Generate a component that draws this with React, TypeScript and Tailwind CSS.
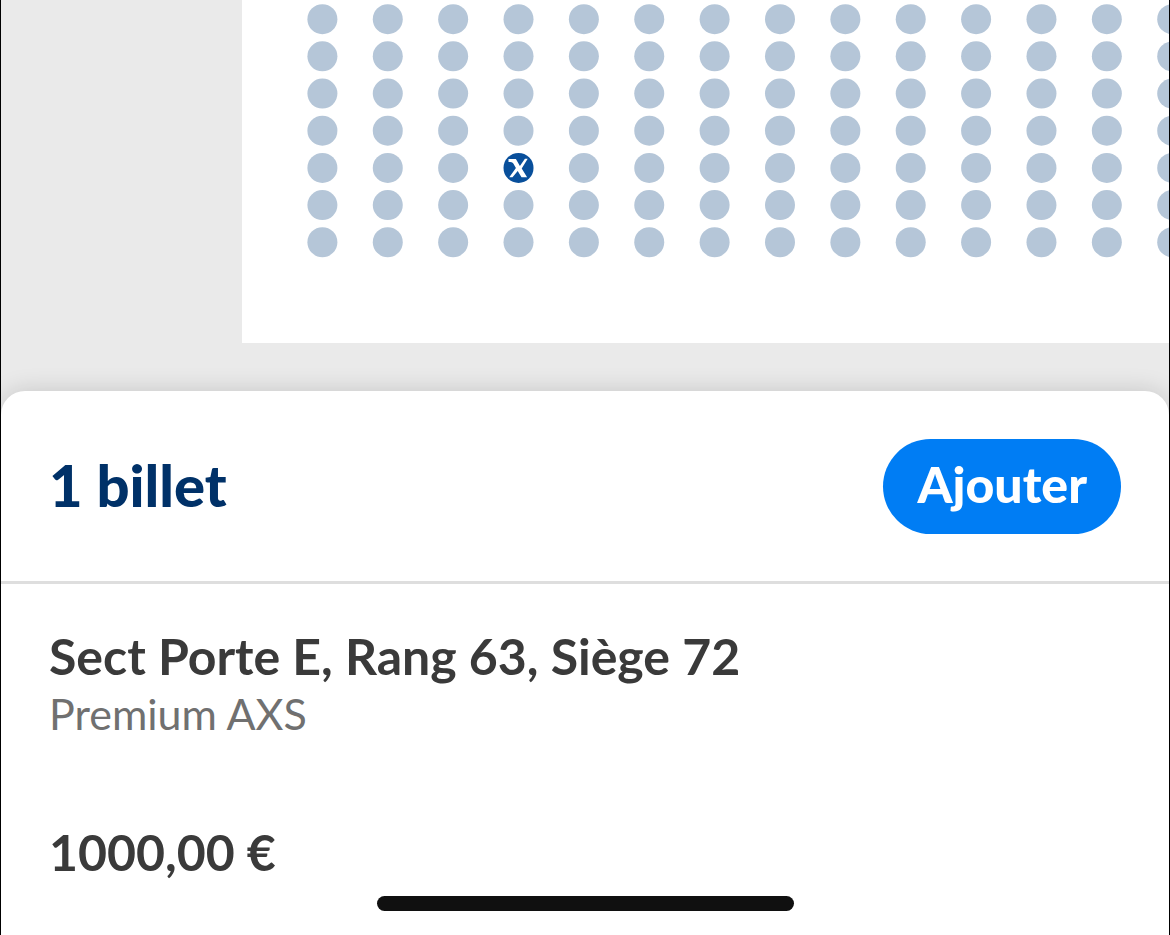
import { type JSX } from "react";

type Seat = { row: number; col: number };

const ROWS = 7;
const COLS = 14;
const SELECTED: Seat = { row: 4, col: 3 };

// Seat map, the last column runs off the right edge
const SeatMap = (): JSX.Element => {
  const seats: Seat[] = [];

  for (let row = 0; row < ROWS; row++) {
    for (let col = 0; col < COLS; col++) {
      seats.push({ row, col });
    }
  }

  return (
    <svg
      className="block w-full h-[343px]"
      role="img"
      aria-label="Plan des sièges"
    >
      {seats.map(({ row, col }) => {
        const x = 80.4 + col * 65.37;
        const y = 19.2 + row * 37.17;

        if (row === SELECTED.row && col === SELECTED.col) {
          return (
            <g key={`${row}-${col}`} transform={`translate(${x} ${y})`}>
              <circle r="15" fill="#084f9b" />
              <path
                d="M-10 -8.8H-2.6L1.4 -2L6.4 -9.2H9.2L3.2 0.6L8.6 9.4H3L-0.8 3L-6 9.4H-9.2L-2.6 0L-5.2 -4.4C-6 -5.6 -7.4 -6 -10 -6Z"
                fill="#fff"
              />
            </g>
          );
        }
        return (
          <circle key={`${row}-${col}`} cx={x} cy={y} r="15" fill="#b5c6d8" />
        );
      })}
    </svg>
  );
};

export default function App(): JSX.Element {
  return (
    <div className="min-h-screen flex flex-col overflow-hidden border-x border-black bg-[#eaeaea] font-['Lato',sans-serif]">
      {/* seat map */}
      <div className="pb-12 pl-[241px]">
        <div className="bg-white">
          <SeatMap />
        </div>
      </div>

      {/* ticket sheet */}
      <main className="grow flex flex-col rounded-t-3xl bg-white shadow-[0_0_24px_rgba(0,0,0,0.16)]">
        <header className="flex items-center justify-between px-12 pt-12 pb-[47px] border-b-3 border-[#dedede]">
          <h1 className="pb-1 text-[58px] leading-[72px] font-black text-[#003168]">
            1 billet
          </h1>
          <button
            type="button"
            className="h-[95px] px-[34px] pb-1 rounded-full bg-[#007df4] text-[50px] font-black text-white"
          >
            Ajouter
          </button>
        </header>

        <section className="grow flex flex-col px-12 pt-11">
          <h2 className="text-[50px] leading-[56px] font-bold text-[#3a3a3a]">
            Sect Porte E, Rang 63, Siège 72
          </h2>
          <p className="text-[43px] leading-[60px] text-[#707070]">
            Premium AXS
          </p>
          <p className="pt-20 text-[50px] leading-[56px] font-bold text-[#3a3a3a]">
            1000,00 €
          </p>
        </section>

        {/* home indicator */}
        <div className="flex justify-center pb-6">
          <div className="w-[417px] h-[15px] rounded-full bg-[#101010]"></div>
        </div>
      </main>
    </div>
  );
}
